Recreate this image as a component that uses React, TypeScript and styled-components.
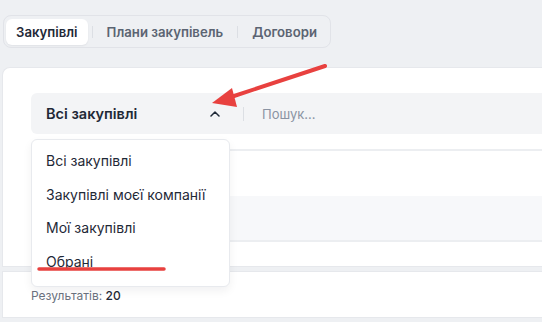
import styled, { createGlobalStyle } from 'styled-components';

const GlobalStyle = createGlobalStyle`
  html, body {
    margin: 0;
    padding: 0;
    background: #eef0f3;
    overflow: hidden;
  }

  body {
    font-family: Inter, 'Noto Sans', sans-serif;
    color: #1f2937;
  }
`;

const Page = styled.div`
  position: relative;
  width: 760px;
  height: 322px;
  padding: 15px 0 0 2px;
  box-sizing: border-box;
`;

const Tabs = styled.nav`
  display: inline-flex;
  align-items: center;
  height: 33px;
  box-sizing: border-box;
  margin-left: 1px;
  padding: 0 3px 0 2px;
  border: 1px solid #e1e3e8;
  border-radius: 8px;
`;

const Tab = styled.button<{ $active?: boolean }>`
  height: 26px;
  padding: 0 10px;
  border: 0;
  border-radius: 6px;
  background: ${(p) => (p.$active ? '#ffffff' : 'transparent')};
  box-shadow: ${(p) => (p.$active ? '0 1px 2px rgba(16, 24, 40, 0.06)' : 'none')};
  color: ${(p) => (p.$active ? '#1f2937' : '#5b6472')};
  font-family: inherit;
  font-size: 13.2px;
  font-weight: 600;
  cursor: pointer;
`;

const TabDivider = styled.span`
  width: 1px;
  height: 12px;
  margin: 0 4px;
  background: #dcdfe4;
`;

const Panel = styled.section<{ $first?: boolean }>`
  background: #ffffff;
  border: 1px solid #e6e8ec;
  border-right: 0;
  border-radius: ${(p) => (p.$first ? '8px 0 0 0' : '0')};
  box-sizing: border-box;
`;

const MainPanel = styled(Panel)`
  margin-top: 19px;
  height: 200px;
  padding-top: 25px;
  display: flex;
  flex-direction: column;
`;

const ResultsPanel = styled(Panel)`
  margin-top: 4px;
  height: 47px;
  padding: 16px 0 0 28px;
  font-size: 12px;
  color: #6b7280;

  b {
    font-weight: 500;
    color: #1f2937;
  }
`;

const FilterBar = styled.div`
  position: relative;
  display: flex;
  align-items: center;
  height: 41px;
  margin-left: 28px;
  border-radius: 6px 0 0 6px;
  background: #f3f4f6;
`;

const Select = styled.div`
  display: flex;
  align-items: center;
  justify-content: space-between;
  width: 212px;
  padding: 0 0 0 15px;
  box-sizing: border-box;
  font-size: 14.5px;
  font-weight: 600;
  color: #1f2937;

  svg {
    margin-right: 23px;
  }
`;

const BarDivider = styled.span`
  width: 1px;
  height: 14px;
  background: #dcdfe4;
  margin-right: 18px;
`;

const Search = styled.span`
  font-size: 13px;
  color: #8a93a3;
`;

const Table = styled.div`
  margin-top: 15px;
  margin-left: 28px;
  flex: 1;
  display: flex;
  flex-direction: column;
  border-top: 2px solid #eceef1;
`;

const HeadRow = styled.div`
  margin-top: 45px;
  height: 44px;
  background: #f7f8fa;
  border-bottom: 2px solid #eceef1;
`;

const Menu = styled.ul`
  position: absolute;
  top: 46px;
  left: 0;
  width: 199px;
  margin: 0;
  padding: 4px 0 8px;
  list-style: none;
  background: #ffffff;
  border: 1px solid #e8eaee;
  border-radius: 6px;
  box-shadow: 0 4px 10px rgba(16, 24, 40, 0.06);
  box-sizing: border-box;
  z-index: 2;
`;

const MenuItem = styled.li`
  height: 33.5px;
  display: flex;
  align-items: center;
  padding-left: 14px;
  font-size: 14px;
  color: #1f2937;
`;

const Annotation = styled.svg`
  position: absolute;
  top: 0;
  left: 0;
  pointer-events: none;
  z-index: 3;
`;

const menuItems = ['Всі закупівлі', 'Закупівлі моєї компанії', 'Мої закупівлі', 'Обрані'];

export default function App() {
  return (
    <>
      <GlobalStyle />
      <Page>
        <Tabs>
          <Tab $active>Закупівлі</Tab>
          <TabDivider />
          <Tab>Плани закупівель</Tab>
          <TabDivider />
          <Tab>Договори</Tab>
        </Tabs>

        <MainPanel $first>
          <FilterBar>
            <Select>
              Всі закупівлі
              <svg width="10" height="6" viewBox="0 0 10 6" fill="none">
                <path d="M1 5l4-4 4 4" stroke="#1f2937" strokeWidth="1.5" strokeLinecap="round" strokeLinejoin="round" />
              </svg>
            </Select>
            <BarDivider />
            <Search>Пошук...</Search>
            <Menu>
              {menuItems.map((item) => (
                <MenuItem key={item}>{item}</MenuItem>
              ))}
            </Menu>
          </FilterBar>
          <Table>
            <HeadRow />
          </Table>
        </MainPanel>

        <ResultsPanel>
          Результатів: <b>20</b>
        </ResultsPanel>

        <Annotation width="542" height="322" viewBox="0 0 542 322">
          <line x1="325" y1="66" x2="228" y2="98" stroke="#e8413f" strokeWidth="4" strokeLinecap="round" />
          <polygon points="212,103 232,88 237,107" fill="#e8413f" />
          <line x1="39" y1="269" x2="164" y2="269" stroke="#e8413f" strokeWidth="3.5" strokeLinecap="round" />
        </Annotation>
      </Page>
    </>
  );
}
